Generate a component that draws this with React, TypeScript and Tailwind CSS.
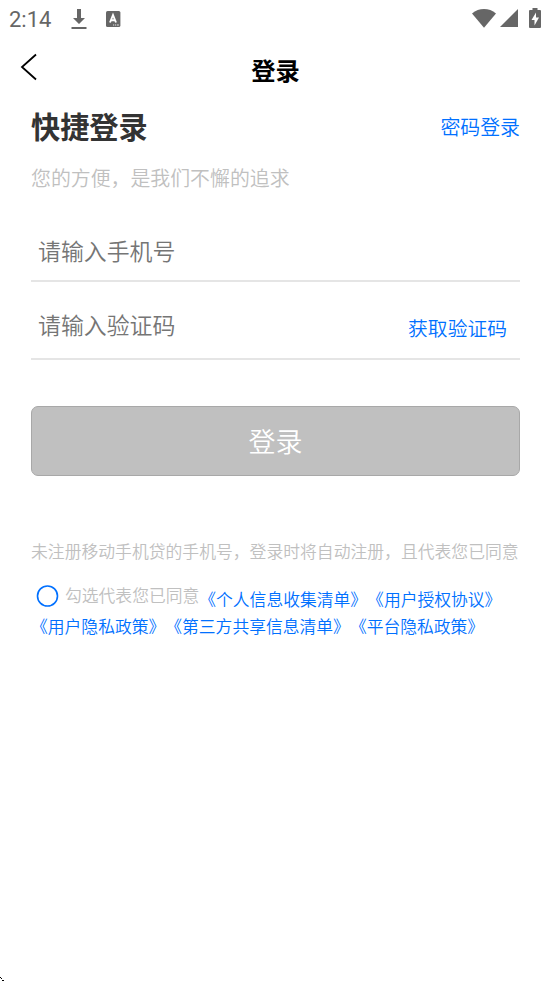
const agreements = [
  ["《个人信息收集清单》", "《用户授权协议》"],
  ["《用户隐私政策》", "《第三方共享信息清单》", "《平台隐私政策》"],
];

const StatusBar = () => (
  <div className="flex h-9 items-center justify-between pl-[9px] pr-[10px] text-[#666666]">
    <div className="flex items-center">
      <span className="w-[62px] font-['Roboto',sans-serif] text-[22px] font-normal leading-9 pt-[3px]">2:14</span>
      <svg className="mt-px h-[22px] w-[16px]" viewBox="0 0 16 22" fill="currentColor">
        <path d="M6 1h4v9h4l-6 6-6-6h4zM.5 19h15v2H.5z" />
      </svg>
      <svg className="ml-[19px] mt-px h-[16px] w-[15px]" viewBox="0 0 15 16">
        <rect width="14.4" height="16" rx="1.6" fill="currentColor" />
        <path d="M4 11.5 7 4l3 7.500M5 9.200h4" fill="none" stroke="#fff" strokeWidth="1.900" />
        <path d="M7.200 14h1M9.200 14h1M11.200 14h1.500" stroke="#fff" strokeWidth="1" />
      </svg>
    </div>
    <div className="flex items-center">
      <svg className="h-[19px] w-[24px]" viewBox="0 0 24 19" fill="currentColor">
        <path d="M0 4.400C7-1.400 17-1.400 24 4.400L12 18.800z" />
      </svg>
      <svg className="ml-[4px] h-[18px] w-[18px]" viewBox="0 0 18 18" fill="currentColor">
        <path d="M0 18 18 0v18z" />
      </svg>
      <svg className="ml-[11px] h-[20px] w-[12px]" viewBox="0 0 12 20">
        <path d="M3.500 0h5v2H11q1 0 1 1v16q0 1-1 1H1q-1 0-1-1V3q0-1 1-1h2.500z" fill="currentColor" />
        <path d="M7 4.500 2.500 12H5.500v5.500L10 9.500H7z" fill="#fff" />
      </svg>
    </div>
  </div>
);

const Header = () => (
  <header className="grid h-[68px] grid-cols-[1fr_auto_1fr] items-center">
    <button className="ml-[20px] mb-[7px] w-fit" aria-label="返回">
      <svg className="h-[28px] w-[18px]" viewBox="0 0 18 28" fill="none" stroke="#000" strokeWidth="1.800">
        <path d="M16 1.500 2 14l14 12.500" />
      </svg>
    </button>
    <h1 className="text-[24.300px] font-bold text-black">登录</h1>
  </header>
);

export default function App() {
  return (
    <div className="flex h-[981px] w-[551px] flex-col overflow-hidden bg-white font-['Noto_Sans_CJK_SC',sans-serif] font-[350]">
      <StatusBar />
      <Header />

      <main className="px-[31px]">
        <div className="flex h-[46px] items-center justify-between">
          <h2 className="pb-[2px] text-[29.200px] font-bold text-[#333333]">快捷登录</h2>
          <a className="text-[19.900px] text-[#0070ff]">密码登录</a>
        </div>
        <p className="mt-[8px] h-[40px] text-[19.900px] leading-[40px] text-[#c0c0c0]">您的方便，是我们不懈的追求</p>

        <div className="mt-[22px] flex h-[62px] items-center border-b-2 border-[#e5e5e5] px-[7px]">
          <input
            className="w-full text-[22.900px] outline-none placeholder:text-[#757575]"
            placeholder="请输入手机号"
          />
        </div>
        <div className="flex h-[78px] items-center justify-between border-b-2 border-[#e5e5e5] pl-[7px] pr-[13px]">
          <input
            className="mt-[9px] w-[300px] text-[22.900px] outline-none placeholder:text-[#757575]"
            placeholder="请输入验证码"
          />
          <button className="mt-[16px] text-[19.800px] text-[#0070ff]">获取验证码</button>
        </div>

        <button className="mt-[46px] h-[70px] w-full rounded-[7px] border border-[#a8a8a8] bg-[#c0c0c0] pt-px text-[27px] text-white">
          登录
        </button>

        <p className="mt-[62px] h-[26px] whitespace-nowrap text-[16.820px] leading-[26px] text-[#c0c0c0]">
          未注册移动手机贷的手机号，登录时将自动注册，且代表您已同意
        </p>

        <div className="mt-[22px] text-[16.800px] leading-[27px] text-[#0070ff]">
          <div className="flex whitespace-nowrap">
            <label className="-mt-[6px] flex items-center pb-[2px] text-[#c0c0c0]">
              <svg className="ml-[5px] mr-[6px] h-[22px] w-[23px]" viewBox="0 0 23 22">
                <circle cx="11.500" cy="11" r="10" fill="none" stroke="#0070ff" strokeWidth="1.600" />
              </svg>
              勾选代表您已同意
            </label>
            {agreements[0].map((name) => (
              <a key={name}>{name}</a>
            ))}
          </div>
          <div className="flex whitespace-nowrap">
            {agreements[1].map((name) => (
              <a key={name}>{name}</a>
            ))}
          </div>
        </div>
      </main>

      <svg className="mt-auto h-[5px] w-[4px]" viewBox="0 0 4 5">
        <path d="M0 1h1v1H0zM1 2h1v1H1zM2 4h2v1H2z" fill="#000" />
      </svg>
    </div>
  );
}
